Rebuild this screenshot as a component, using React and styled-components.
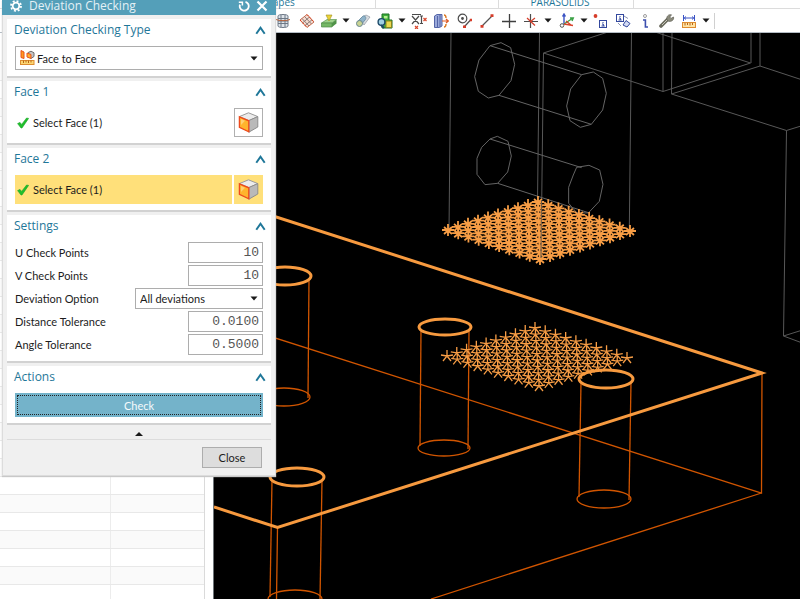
import React, { useState } from 'react';
import styled, { createGlobalStyle } from 'styled-components';

const GlobalStyle = createGlobalStyle`
    * {
        box-sizing: border-box;
    }
    body {
        margin: 0;
        background: #ffffff;
        font-family: 'Lato', 'Open Sans', sans-serif;
        font-size: 11px;
        color: #1c1c1c;
    }
    button, input, select {
        font: inherit;
        color: inherit;
        margin: 0;
    }
`

const Page = styled.div`
    position: relative;
    height: 100vh;
    display: flex;
    flex-direction: column;
    overflow: hidden;
`
// ribbon group captions
const Ribbon = styled.div`
    flex: none;
    height: 9px;
    display: flex;
    border-bottom: 1px solid #dcdcdc;
`
const RibbonGroup = styled.div`
    flex: 0 0 ${({ $width }) => $width}px;
    display: flex;
    align-items: center;
    justify-content: center;
    height: 4px;
    line-height: 16px;
    font-family: 'Open Sans', sans-serif;
    font-size: 10px;
    color: #1f7799;
`
const RibbonLine = styled.div`
    flex: none;
    width: 1px;
    background: #dcdcdc;
`
// icon toolbar
const Toolbar = styled.div`
    flex: none;
    height: 24px;
    display: flex;
    align-items: center;
    gap: 2px;
    padding-left: 272px;
    border-bottom: 1px solid #b4bcc4;
    background: #ffffff;
`
const ToolGroup = styled.div`
    display: flex;
    align-items: center;
`
const ToolButton = styled.button`
    width: 22px;
    height: 22px;
    display: flex;
    align-items: center;
    justify-content: center;
    padding: 0;
    border: 0;
    background: none;
`
const CaretButton = styled(ToolButton)`
    width: 12px;
`
const ToolLine = styled.div`
    width: 1px;
    height: 16px;
    background: #d0d0d0;
`
const Workspace = styled.div`
    flex: 1;
    min-height: 0;
    display: flex;
`
// navigator
const Navigator = styled.div`
    flex: 0 0 205px;
    overflow: hidden;
    border-right: 1px solid #dadada;
    margin-right: 8px;
`
const Tree = styled.table`
    width: 100%;
    border-collapse: collapse;
    table-layout: fixed;
`
const TreeHead = styled.th`
    width: ${({ $width }) => $width || 'auto'};
    height: 29px;
    padding: 0;
    border-bottom: 1px solid #e6e6e6;
`
const TreeRow = styled.tr`
    height: 18px;
    background: ${({ $shaded }) => ($shaded ? '#fafafa' : '#ffffff')};
`
const TreeCell = styled.td`
    padding: 0;
    border-bottom: 1px solid #e8e8e8;
    border-right: 1px solid #ececec;
    &:last-child {
        border-right: 0;
    }
`
// graphics window
const Viewport = styled.div`
    flex: 1;
    min-width: 0;
    background: #000000;
    border-left: 1px solid #6e7478;
    overflow: hidden;
`
const Scene = styled.svg`
    display: block;
    width: 100%;
    height: 100%;
    fill: none;
`
// dialog
const Dialog = styled.form`
    position: absolute;
    top: 0;
    left: 2px;
    width: 274px;
    background: #f0f0f0;
    box-shadow: inset 0 0 0 1px #dcdcdc, 0 1px 1px #c8c8c8;
`
const TitleBar = styled.header`
    height: 15px;
    display: flex;
    align-items: center;
    gap: 6px;
    padding: 0 8px 4px;
    background: #549fb9;
    color: #ffffff;
`
const Title = styled.h1`
    flex: 1;
    margin: 0;
    padding-left: 1px;
    font-family: 'Open Sans', sans-serif;
    font-size: 12px;
    font-weight: 400;
    line-height: 12px;
    color: #e4f1f6;
`
const TitleButton = styled.button`
    width: 12px;
    height: 12px;
    display: flex;
    padding: 0;
    border: 0;
    background: none;
`
const Sections = styled.div`
    display: flex;
    flex-direction: column;
    gap: 3px;
    padding: 4px 5px 0;
`
const Section = styled.section`
    padding: 0 8px 6px 7px;
    background: #ffffff;
    border-bottom: 2px solid #d2d2d2;
`
const SectionHead = styled.div`
    height: 27px;
    display: flex;
    align-items: flex-start;
    justify-content: space-between;
`
const SectionTitle = styled.h2`
    margin: 0;
    font-family: 'Open Sans', sans-serif;
    font-size: 12px;
    font-weight: 400;
    line-height: 22px;
    color: #1f7799;
`
const SectionBody = styled.div`
    padding-left: 1px;
`
const FoldButton = styled.button`
    height: 22px;
    display: flex;
    align-items: center;
    padding: 0;
    border: 0;
    background: none;
    margin-right: -3px;
`
const SelectBox = styled.div`
    position: relative;
    width: ${({ $width }) => $width || '100%'};
    height: ${({ $height }) => $height}px;
`
const Select = styled.select`
    width: 100%;
    height: 100%;
    padding: 0 16px 0 ${({ $indent }) => $indent}px;
    appearance: none;
    border: 1px solid #adadad;
    border-radius: 0;
    background: #ffffff;
`
const SelectIcon = styled.span`
    position: absolute;
    left: 5px;
    top: 4px;
    display: flex;
    pointer-events: none;
`
const SelectArrow = styled.span`
    position: absolute;
    right: 5px;
    top: 0;
    height: 100%;
    display: flex;
    align-items: center;
    pointer-events: none;
`
const PickRow = styled.div`
    display: flex;
    gap: 2px;
    height: 29px;
`
const PickLabel = styled.div`
    flex: 1;
    display: flex;
    align-items: center;
    gap: 4px;
    padding-left: 2px;
    background: ${({ $active }) => ($active ? '#ffe07a' : '#ffffff')};
`
const PickButton = styled.button`
    width: 29px;
    display: flex;
    align-items: center;
    justify-content: center;
    padding: 0;
    border: 1px solid ${({ $active }) => ($active ? '#ffe07a' : '#b0b0b0')};
    background: ${({ $active }) => ($active ? '#ffe07a' : '#ffffff')};
`
const Fields = styled.div`
    display: flex;
    flex-direction: column;
    gap: 2px;
`
const Field = styled.div`
    height: 21px;
    display: flex;
    align-items: center;
    justify-content: space-between;
`
const ValueInput = styled.input`
    width: 75px;
    height: 21px;
    padding: 0 3px;
    border: 1px solid #adadad;
    font-family: 'Liberation Mono', monospace;
    font-size: 13px;
    text-align: right;
    color: #555555;
`
const CheckButton = styled.button`
    display: block;
    width: 100%;
    height: 24px;
    padding: 0;
    border: 0;
    background: #74b3ca;
    color: #f4fafc;
    outline: 1px dotted #222222;
    outline-offset: -3px;
`
const MoreButton = styled.button`
    display: flex;
    align-items: center;
    justify-content: center;
    width: 264px;
    height: 15px;
    margin: 0 5px;
    padding: 2px 0 0;
    border: 0;
    border-bottom: 1px solid #dcdcdc;
    background: none;
`
const Footer = styled.footer`
    display: flex;
    justify-content: flex-end;
    padding: 7px 14px 8px;
`
const CloseButton = styled.button`
    width: 60px;
    height: 21px;
    padding: 0;
    border: 1px solid #adadad;
    background: #dddddd;
`

const Caret = ({ up }) => (
    <svg width="8" height="5" viewBox="0 0 8 5">
        <path d={up ? 'M0 5L4 1L8 5Z' : 'M0.5 0.5H7.5L4 4.5Z'} fill="#1a1a1a" />
    </svg>
)

const Chevron = () => (
    <svg width="11" height="9" viewBox="0 0 11 9">
        <path d="M1.3 7.8L5.5 1.8L9.7 7.8" fill="none" stroke="#1f7799" strokeWidth="2" />
    </svg>
)

const Tick = () => (
    <svg width="12" height="12" viewBox="0 0 12 12">
        <path d="M0.6 6.6L3 5.4L4.6 7.4L9.6 1L11.6 1.4L5 11H4Z" fill="#1fc02c" stroke="#16a324" strokeWidth="0.6" />
    </svg>
)

const Cube = () => (
    <svg width="21" height="21" viewBox="0 0 21 21">
        <path d="M10.5 0.8L19.8 4.6L10.8 8.6L1.4 4.6Z" fill="#ececec" stroke="#9a9a9a" />
        <path d="M19.8 4.6V15L10.8 20.2V8.6Z" fill="#b9b9b9" stroke="#8e8e8e" />
        <path d="M1.4 4.8L10.8 8.8V19.8L1.4 15.4Z" fill="#ffb42c" stroke="#ee4a1c" strokeWidth="1.3" />
        <path d="M3 7L7 8.8L3 13Z" fill="#ffd071" />
    </svg>
)

const FaceToFaceIcon = () => (
    <svg width="15" height="15" viewBox="0 0 15 15">
        <path d="M1 0.5L4 2V8.5L1 7.5Z" fill="#ff9a1f" stroke="#e8501c" />
        <path d="M8 2.6L11 1.2L14 2.8V6.5L11 8.5" fill="#c4c4c4" stroke="#6f6f6f" />
        <path d="M7 3L11 4.5V8.5L7 7Z" fill="#ffb02c" stroke="#e8501c" />
        <rect x="0.5" y="10.5" width="13.5" height="4" fill="#fbd774" stroke="#dc8c30" />
        <path d="M3.5 10.5V13M6 10.5V12.5M8.5 10.5V13M11 10.5V12.5" stroke="#b86414" />
    </svg>
)

const Gear = () => (
    <svg width="12" height="12" viewBox="0 0 12 12" fill="none" stroke="#ffffff">
        <circle cx="6" cy="6" r="3.3" strokeWidth="1.8" />
        <circle cx="6" cy="6" r="5" strokeWidth="1.8" strokeDasharray="1.96 1.96" />
    </svg>
)

const Reset = () => (
    <svg width="12" height="12" viewBox="0 0 12 12" fill="none" stroke="#ffffff" strokeWidth="1.8">
        <path d="M7.5 1.8A4.5 4.5 0 1 1 2 4.6" />
        <path d="M0.8 2.2H4.4V5.6" strokeWidth="1.5" />
    </svg>
)

const Cross = () => (
    <svg width="12" height="12" viewBox="0 0 12 12" stroke="#ffffff" strokeWidth="2.2">
        <path d="M1.5 1.5L10.5 10.5M10.5 1.5L1.5 10.5" />
    </svg>
)

const toolDrawings = {
    mesh: (
        <g stroke="#6c7886">
            <path d="M3 3C3 1 13 1 13 3V13C13 15 3 15 3 13Z" fill="#dfe4ea" />
            <path d="M3 5.5H13M3 8H13M3 10.5H13M6 2V14M10 2V14" />
            <path d="M1 6.5C4 8 12 8 15 6.5" stroke="#b8653e" fill="none" />
        </g>
    ),
    sheet: (
        <g stroke="#c8694c" fill="none">
            <path d="M1 7L8 1.5L15 9L8 14.5Z" fill="#f6ddd2" />
            <path d="M3 5.5L10 13M5.5 3.5L12.5 11M3.5 10L10.5 4M6 12.5L13 6.8" stroke="#8d7c78" />
            <path d="M1 7L8 14.5M8 1.5L15 9" strokeDasharray="2 1.5" stroke="#e2401c" />
        </g>
    ),
    draft: (
        <g>
            <path d="M0.5 10L6 6.5H15.5L11 10Z" fill="#9fd38c" stroke="#5d9b56" strokeWidth="0.7" />
            <path d="M0.5 10H11V14H0.5Z" fill="#74b765" stroke="#4d8a48" strokeWidth="0.7" />
            <path d="M11 10L15.5 6.5V10.5L11 14Z" fill="#4f9248" />
            <path d="M5 2H11L8 8Z" fill="#ead23a" stroke="#a08e1c" strokeWidth="0.6" />
        </g>
    ),
    tube: (
        <g>
            <path d="M5 6L11 2L15 4L9 12Z" fill="#d8dce0" stroke="#9098a0" strokeWidth="0.7" />
            <path d="M3 8L8 3C10 2 12 5 10 7L6 12Z" fill="#8fb3c9" stroke="#5c7f96" strokeWidth="0.7" />
            <circle cx="4.5" cy="10.5" r="3" fill="#c9d392" stroke="#66858f" />
        </g>
    ),
    check: (
        <g>
            <path d="M5 1H12V7H15V15H5Z" fill="#3fae3a" stroke="#1d7325" />
            <path d="M9 8H14.5V14.5H9Z" fill="#e9d94e" stroke="#8c8320" />
            <path d="M7 3H10.5V5.5H7Z" fill="#b7ef91" />
            <circle cx="4.5" cy="9" r="3.4" fill="#9fd1e4" stroke="#1c4868" strokeWidth="1.4" />
            <path d="M4 12L7 15" stroke="#1c4868" strokeWidth="2" />
        </g>
    ),
    delta: (
        <g stroke="#4a4a4a" fill="none" strokeWidth="1.2">
            <path d="M1 3L8 11M8 3L1 11M1 1.5H10M10.5 3V10M9 3H12M9 10.5H12" />
            <path d="M12.500 5L15.500 8M15.500 5L12.500 8M4 13L7 16M7 13L4 16" stroke="#d9482e" />
        </g>
    ),
    offset: (
        <g>
            <path d="M1.5 3L4 1.5H9V13L6.5 14.5H1.5Z" fill="#9aa9da" stroke="#5465a8" />
            <path d="M4.5 3V14M7 2V14" stroke="#5465a8" />
            <path d="M11 2C13 2 13 4 13 5M11 14C13 14 13 12 13 11" stroke="#dd7a24" fill="none" strokeWidth="1.4" />
            <path d="M9 8H15M13 6L15.3 8L13 10" stroke="#dd5a24" fill="none" strokeWidth="1.2" />
        </g>
    ),
    circleLine: (
        <g fill="none" stroke="#4d4d4d" strokeWidth="1.2">
            <circle cx="5.5" cy="5.5" r="4.3" />
            <circle cx="5.5" cy="5.5" r="0.8" fill="#4d4d4d" />
            <path d="M7.5 13.5L14 6.5" />
            <path d="M6 13.7H9M12.8 7H15" stroke="#d63d2a" strokeWidth="2.6" />
        </g>
    ),
    line: (
        <g stroke="#555555" strokeWidth="1.2">
            <path d="M3 13L13 3" />
            <path d="M1.5 13.3H4.5M11.5 2.7H14.5" stroke="#d63d2a" strokeWidth="2.8" />
        </g>
    ),
    plus: <path d="M1 8.5H15M8.5 1V15" stroke="#3f3f3f" strokeWidth="1.3" />,
    crossing: (
        <g stroke="#4d4d4d" strokeWidth="1.2">
            <path d="M1 8.5H15M7.5 1V15" />
            <path d="M4 5L12 12.5M12 5L7 9" stroke="#d63d2a" />
        </g>
    ),
    csys: (
        <g fill="none" strokeWidth="1.4">
            <path d="M5 11V1M3.5 3.5L5 1L6.5 3.5" stroke="#3b53c4" />
            <path d="M5 11L14 5M11 5L14.3 5L13 8" stroke="#3aa145" />
            <path d="M5 11L14 12.5M7 8L12 12" stroke="#d8432c" />
            <circle cx="3" cy="12.5" r="1.8" stroke="#555555" strokeWidth="1" />
        </g>
    ),
    pointInfo: (
        <g>
            <circle cx="2.500" cy="3" r="1.9" fill="#d63d2a" />
            <rect x="6.5" y="7.5" width="7" height="7" fill="#ffffff" stroke="#33489e" />
            <path d="M10 9V10M9 11H10.300V13M8.500 13H11.700" stroke="#33489e" fill="none" />
        </g>
    ),
    objectInfo: (
        <g stroke="#33489e" fill="none">
            <rect x="1.5" y="1.5" width="7" height="7" fill="#ffffff" />
            <path d="M5 3V4M4 5H5.300V7M3.500 7H6.700" />
            <path d="M11 7.5L15 10.5L12 14L8 12Z" fill="#d4dcf4" />
            <path d="M3 10L6 13M9 3L13 5.5" stroke="#8a94b4" />
        </g>
    ),
    info: (
        <g fill="none" stroke="#3d4fae" strokeWidth="1.6">
            <circle cx="8" cy="3" r="1.5" stroke="#9c9c9c" strokeWidth="1" />
            <path d="M6 7H8.4V14H11" />
        </g>
    ),
    wrench: (
        <g>
            <path d="M2 13L8.5 6.5" stroke="#6b6b5e" strokeWidth="3.6" strokeLinecap="round" />
            <path d="M8 7C7 3.5 9.5 1 12.5 1.8L10.8 4L12 5.4L14.5 4C15.4 7 12 9.4 9 8Z" fill="#8b8b7c" stroke="#5f5f54" strokeWidth="0.7" />
            <path d="M3 12L8 7" stroke="#c8c8ba" />
        </g>
    ),
    measure: (
        <g>
            <path d="M2.5 2V8M13.5 2V8M3 5H13M5 3.5L3.3 5L5 6.5M11 3.5L12.7 5L11 6.5" stroke="#3b53c4" fill="none" />
            <rect x="1.5" y="9.5" width="13" height="5" fill="#ffe3a4" stroke="#dd8b30" />
            <path d="M4 10V12.5M6.5 10V12M9 10V12.5M11.5 10V12" stroke="#b86414" />
        </g>
    ),
}

const toolGroups = [
    ['mesh'],
    ['sheet', 'draft', 'caret', 'tube', 'check', 'caret', 'delta', 'offset'],
    ['circleLine', 'line', 'plus', 'crossing', 'caret'],
    ['csys', 'caret', 'pointInfo', 'objectInfo', 'info', 'wrench', 'measure', 'caret'],
]

// one row of stars between two corners, repeated down the other edge
const starGrid = (left, top, bottom, count) => {
    const points = []
    for (let i = 0; i < count; i++) {
        for (let j = 0; j < count; j++) {
            const u = i / (count - 1)
            const v = j / (count - 1)
            points.push([
                left[0] + (top[0] - left[0]) * u + (bottom[0] - left[0]) * v,
                left[1] + (top[1] - left[1]) * u + (bottom[1] - left[1]) * v,
            ])
        }
    }
    return points
}

const upperStars = starGrid([448, 230], [538, 202], [540, 259], 10)
const lowerStars = starGrid([447, 356], [535, 328], [539, 386], 10)

const cylinders = [
    { top: [285, 276, 26, 9], base: [284, 397, 26, 9] },
    { top: [445, 327, 26, 8], base: [444, 448, 26, 8] },
    { top: [606, 379, 27, 9], base: [604, 499, 27, 9] },
    { top: [297, 477, 27, 9], base: [295, 599, 27, 9] },
]

const Model = () => (
    <Scene viewBox="214 33 586 566" preserveAspectRatio="xMinYMin slice">
        {/* hidden body */}
        <g stroke="#585858">
            <path d="M451 32L449 230M539.5 32L537.5 202M543.5 53L541 260M631.5 32L629.3 230" />
            <path d="M608 32L543.5 53L663 91.5L750.5 63L655 32M663 32V91.5M751 32V63" />
            <path d="M672 32L671.5 94L760 66V32M760 66L801 79.5M671.5 94L786.5 130.5L801 126" />
            <path d="M786.5 130.5L783.5 336L801 330.5M783.5 336L801 342.5" />
        </g>
        <g stroke="#646464" strokeWidth="3" transform="translate(430 30) scale(0.3333)">
            <path d="M180 47L213 38L242 53L254 103L243 152L207 196L175 204L145 184L134 140L147 90Z" />
            <path d="M455 134L490 126L518 145L529 190L518 240L484 283L451 292L420 272L410 228L422 177Z" />
            <path d="M180 327L202 319L234 334L244 378L233 426L203 460L165 464L141 433V385L155 352Z" />
            <path d="M440 412L477 406L509 420L519 463L508 514L475 549L440 548L416 520V472L430 435Z" />
            <path d="M180 47L455 134M207 196L484 283M180 327L455 413M203 460L475 548" />
        </g>
        {/* base block */}
        <g stroke="#d15500" strokeWidth="1.3">
            <path d="M214 318.5L761.5 493L762 373M761.5 493L431 599M277.5 528L276.5 599" />
            {cylinders.map(({ top, base }) => (
                <g key={top[0]}>
                    <ellipse cx={base[0]} cy={base[1]} rx={base[2]} ry={base[3]} />
                    <path d={`M${top[0] - top[2] + 2} ${top[1] + 3}L${base[0] - base[2] + 2} ${base[1] - 2}`} />
                    <path d={`M${top[0] + top[2] - 2} ${top[1] + 3}L${base[0] + base[2] - 2} ${base[1] + 1}`} />
                </g>
            ))}
        </g>
        <path
            d={upperStars.map(([x, y]) => `M${x - 6} ${y}h12M${x} ${y - 6}v12M${x - 4} ${y - 3}l8 7M${x + 4} ${y - 3}l-8 7`).join('')}
            stroke="#f79d45"
            strokeWidth="1.8"
        />
        <path d="M541.5 200L541 258" stroke="#6b5a48" />
        <path
            d={lowerStars.map(([x, y]) => `M${x - 6} ${y - 1}L${x} ${y}L${x + 6} ${y - 1}M${x} ${y - 6}V${y}L${x - 4} ${y + 5}M${x} ${y}L${x + 4} ${y + 5}`).join('')}
            stroke="#f79d45"
            strokeWidth="1.3"
        />
        <g stroke="#f79a3f" strokeWidth="3">
            <path d="M214 197L762 373L277.5 527.5L214 507" />
            {cylinders.map(({ top }) => (
                <ellipse key={top[0]} cx={top[0]} cy={top[1]} rx={top[2]} ry={top[3]} />
            ))}
        </g>
    </Scene>
)

const Panel = ({ title, children }) => {
    const [open, setOpen] = useState(true)
    return (
        <Section>
            <SectionHead>
                <SectionTitle>{title}</SectionTitle>
                <FoldButton type="button" aria-label={`Toggle ${title}`} aria-expanded={open} onClick={() => setOpen(!open)}>
                    <Chevron />
                </FoldButton>
            </SectionHead>
            {open && <SectionBody>{children}</SectionBody>}
        </Section>
    )
}

const FacePicker = ({ title, active }) => (
    <Panel title={title}>
        <PickRow>
            <PickLabel $active={active}>
                <Tick />
                Select Face (1)
            </PickLabel>
            <PickButton type="button" $active={active} aria-label={`Select ${title}`}>
                <Cube />
            </PickButton>
        </PickRow>
    </Panel>
)

const NumberField = ({ id, label, value }) => (
    <Field>
        <label htmlFor={id}>{label}</label>
        <ValueInput id={id} type="text" defaultValue={value} />
    </Field>
)

export default function App() {
    return (
        <Page>
            <GlobalStyle />
            <Ribbon>
                <RibbonGroup $width={181} />
                <RibbonGroup $width={194}>Shapes</RibbonGroup>
                <RibbonLine />
                <RibbonGroup $width={122} />
                <RibbonLine />
                <RibbonGroup $width={122}>PARASOLIDS</RibbonGroup>
                <RibbonGroup $width={12} />
                <RibbonLine />
            </Ribbon>
            <Toolbar>
                {toolGroups.map((group, g) => (
                    <ToolGroup key={g}>
                        {group.map((name, i) => (
                            name === 'caret' ? (
                                <CaretButton key={i} type="button" aria-label="More"><Caret /></CaretButton>
                            ) : (
                                <ToolButton key={i} type="button" aria-label={name}>
                                    <svg width="16" height="16" viewBox="0 0 16 16">{toolDrawings[name]}</svg>
                                </ToolButton>
                            )
                        ))}
                    </ToolGroup>
                ))}
                <ToolLine />
            </Toolbar>
            <Workspace>
                <Navigator>
                    <Tree>
                        <thead>
                            <tr>
                                <TreeHead $width="110px" />
                                <TreeHead />
                            </tr>
                        </thead>
                        <tbody>
                            {Array.from({ length: 30 }, (_, i) => (
                                <TreeRow key={i} $shaded={i % 2 === 0}>
                                    <TreeCell />
                                    <TreeCell />
                                </TreeRow>
                            ))}
                        </tbody>
                    </Tree>
                </Navigator>
                <Viewport>
                    <Model />
                </Viewport>
            </Workspace>
            <Dialog onSubmit={(e) => e.preventDefault()}>
                <TitleBar>
                    <Gear />
                    <Title>Deviation Checking</Title>
                    <TitleButton type="button" aria-label="Reset"><Reset /></TitleButton>
                    <TitleButton type="button" aria-label="Close dialog"><Cross /></TitleButton>
                </TitleBar>
                <Sections>
                    <Panel title="Deviation Checking Type">
                        <SelectBox $height={24}>
                            <Select $indent={21} aria-label="Deviation Checking Type" defaultValue="Face to Face">
                                <option>Face to Face</option>
                            </Select>
                            <SelectIcon><FaceToFaceIcon /></SelectIcon>
                            <SelectArrow><Caret /></SelectArrow>
                        </SelectBox>
                    </Panel>
                    <FacePicker title="Face 1" />
                    <FacePicker title="Face 2" active />
                    <Panel title="Settings">
                        <Fields>
                            <NumberField id="u-points" label="U Check Points" value="10" />
                            <NumberField id="v-points" label="V Check Points" value="10" />
                            <Field>
                                <label htmlFor="deviation-option">Deviation Option</label>
                                <SelectBox $width="128px" $height={21}>
                                    <Select id="deviation-option" $indent={4} defaultValue="All deviations">
                                        <option>All deviations</option>
                                    </Select>
                                    <SelectArrow><Caret /></SelectArrow>
                                </SelectBox>
                            </Field>
                            <NumberField id="distance-tolerance" label="Distance Tolerance" value="0.0100" />
                            <NumberField id="angle-tolerance" label="Angle Tolerance" value="0.5000" />
                        </Fields>
                    </Panel>
                    <Panel title="Actions">
                        <CheckButton type="submit">Check</CheckButton>
                    </Panel>
                </Sections>
                <MoreButton type="button" aria-label="Show less"><Caret up /></MoreButton>
                <Footer>
                    <CloseButton type="button">Close</CloseButton>
                </Footer>
            </Dialog>
        </Page>
    )
}
